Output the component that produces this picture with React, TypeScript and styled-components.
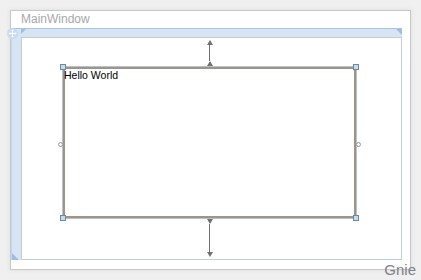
import React from 'react';
import styled, { createGlobalStyle } from 'styled-components';

// Designer surface colours
// page:    #f0f0f0
// ruler:   #d6e4f4 / #a9c6e8
// select:  #a39381 (tan) / #b0c4d9 (blue)

const Global = createGlobalStyle`
  html, body {
    margin: 0;
    padding: 0;
    background: #f0f0f0;
    font-family: "Liberation Sans", Arial, sans-serif;
  }
`;

const Page = styled.div`
  position: relative;
  width: 421px;
  height: 280px;
  padding: 10px 0 0 10px;
  box-sizing: border-box;
  overflow: hidden;
`;

const Window = styled.div`
  position: relative;
  width: 401px;
  height: 260px;
  box-sizing: border-box;
  border: 1px solid #c8c8c8;
  background: #fff;
  box-shadow: 0 0 5px rgba(0, 0, 0, 0.08);
  display: grid;
  grid-template-rows: 17px 1fr;
  padding: 0 8px 9px 0;
`;

const Title = styled.div`
  padding-left: 10px;
  font-size: 12px;
  line-height: 17px;
  color: #a8a8a8;
`;

const Body = styled.div`
  display: grid;
  grid-template-columns: 10px 1fr;
  grid-template-rows: 9px 1fr;
`;

const RulerCorner = styled.div`
  background: #d6e4f4;
  border-top: 1px solid #a9c6e8;
  box-sizing: border-box;
  position: relative;
`;

const TopRuler = styled.div`
  background: #d6e4f4;
  border-top: 1px solid #a9c6e8;
  box-sizing: border-box;
  position: relative;
`;

const LeftRuler = styled.div`
  background: #d6e4f4;
  border-left: 1px solid #c3d7ee;
  box-sizing: border-box;
  position: relative;
`;

const Notch = styled.div<{ $corner: 'tl' | 'tr' | 'bl' }>`
  position: absolute;
  width: 0;
  height: 0;
  ${(p) =>
    p.$corner === 'tl'
      ? `left: 0; top: 0; border-top: 5px solid #9fbde3; border-right: 5px solid transparent;`
      : p.$corner === 'tr'
      ? `right: 0; top: 0; border-top: 6px solid #9fbde3; border-left: 6px solid transparent;`
      : `left: 0; bottom: 0; border-bottom: 7px solid #9fbde3; border-right: 7px solid transparent;`}
`;

const Canvas = styled.div`
  border: 1px solid #c3cdd9;
  background: #fff;
  padding: 29px 0 0 41px;
`;

const Selection = styled.div`
  position: relative;
  width: 293px;
  height: 151px;
  box-sizing: border-box;
  border: 2px solid #a39381;
  box-shadow: 0 0 0 1px #b0c4d9;
`;

const Label = styled.div`
  font-size: 10.5px;
  line-height: 12px;
  color: #000;
  margin-left: -1px;
`;

const Handle = styled.div<{ $x: 'l' | 'r'; $y: 't' | 'b' }>`
  position: absolute;
  width: 6px;
  height: 6px;
  box-sizing: border-box;
  background: #c9d9e7;
  border: 1px solid #6b89a8;
  ${(p) => (p.$x === 'l' ? 'left: -5px;' : 'right: -5px;')}
  ${(p) => (p.$y === 't' ? 'top: -5px;' : 'bottom: -5px;')}
`;

const Ring = styled.div<{ $side: 'l' | 'r' }>`
  position: absolute;
  top: 73px;
  width: 5px;
  height: 5px;
  box-sizing: border-box;
  border: 1px solid #9a9a9a;
  border-radius: 50%;
  background: #fff;
  ${(p) => (p.$side === 'l' ? 'left: -7px;' : 'right: -7px;')}
`;

const Margin = styled.div<{ $side: 'top' | 'bottom' }>`
  position: absolute;
  left: 141px;
  width: 7px;
  display: flex;
  flex-direction: column;
  align-items: center;
  justify-content: space-between;
  ${(p) => (p.$side === 'top' ? 'top: -29px; height: 26px;' : 'bottom: -41px; height: 38px;')}
`;

const Stem = styled.div`
  flex: 1;
  width: 1px;
  background: #707070;
`;

const Tri = styled.div<{ $dir: 'up' | 'down' }>`
  width: 0;
  height: 0;
  border-left: 3.5px solid transparent;
  border-right: 3.5px solid transparent;
  ${(p) =>
    p.$dir === 'up'
      ? 'border-bottom: 5px solid #707070;'
      : 'border-top: 5px solid #707070;'}
`;

const MoveGrip = styled.div`
  position: absolute;
  left: -4px;
  top: 14px;
  width: 11px;
  height: 11px;
`;

const Watermark = styled.div`
  position: absolute;
  right: 5px;
  bottom: 2px;
  font-size: 15px;
  color: #80808a;
`;

const MarginArrow = ({ side }: { side: 'top' | 'bottom' }) => {
  const dir = side === 'top' ? 'up' : 'down';
  return (
    <Margin $side={side}>
      <Tri $dir={dir} />
      <Stem />
      <Tri $dir={dir} />
    </Margin>
  );
};

const App = () => {
  return (
    <Page>
      <Global />
      <Window>
        <Title>MainWindow</Title>
        <Body>
          <RulerCorner>
            <Notch $corner="tl" />
          </RulerCorner>
          <TopRuler>
            <Notch $corner="tl" />
            <Notch $corner="tr" />
          </TopRuler>
          <LeftRuler>
            <Notch $corner="bl" />
          </LeftRuler>
          <Canvas>
            <Selection>
              <Label>Hello World</Label>
              <Handle $x="l" $y="t" />
              <Handle $x="r" $y="t" />
              <Handle $x="l" $y="b" />
              <Handle $x="r" $y="b" />
              <Ring $side="l" />
              <Ring $side="r" />
              <MarginArrow side="top" />
              <MarginArrow side="bottom" />
            </Selection>
          </Canvas>
        </Body>
        <MoveGrip>
          <svg width="11" height="11" viewBox="0 0 11 11">
            <circle cx="5.5" cy="5.5" r="5.5" fill="#c9dcf1" />
            <path
              d="M5.5 1.5 L7 3 H6 V5 H8 V4 L9.5 5.5 L8 7 V6 H6 V8 H7 L5.5 9.5 L4 8 H5 V6 H3 V7 L1.5 5.5 L3 4 V5 H5 V3 H4 Z"
              fill="#fff"
            />
          </svg>
        </MoveGrip>
      </Window>
      <Watermark>Gnie</Watermark>
    </Page>
  );
};

export default App;
